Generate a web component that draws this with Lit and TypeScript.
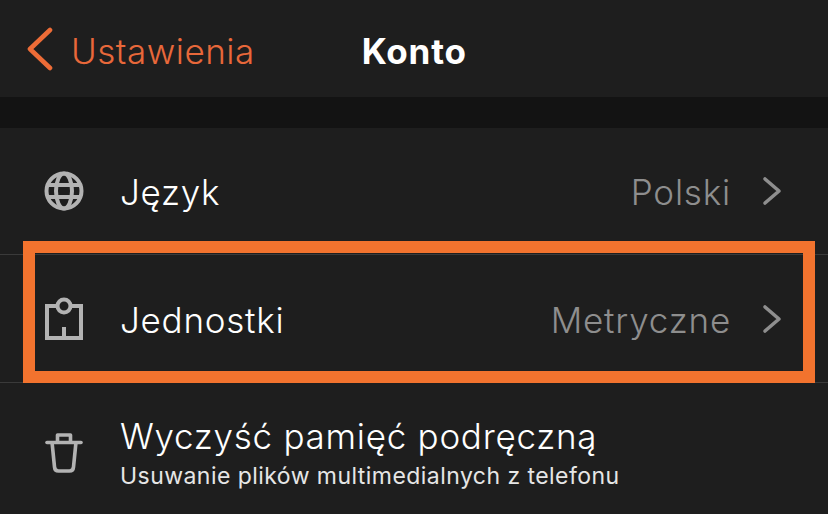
import { LitElement, css, html, svg } from 'lit';
import { customElement } from 'lit/decorators.js';

const chevron = html`<svg class="chevron" width="20" height="30" viewBox="0 0 20 30" fill="none">
  <path d="M3 3l14 12L3 27" stroke="#8e8e8e" stroke-width="3.6" stroke-linecap="round" stroke-linejoin="round" />
</svg>`;

const globe = svg`<g fill="none" stroke="#b3b3b3" stroke-width="4">
  <circle cx="20" cy="20" r="17.5" />
  <ellipse cx="20" cy="20" rx="8" ry="17.5" />
  <path d="M4 14h32M4 26h32" />
</g>`;

const clipboard = svg`<g fill="none" stroke="#b3b3b3" stroke-width="4">
  <path d="M11.5 9H2v32h34V9h-9.5" />
  <circle cx="19" cy="9" r="6.5" />
  <path d="M19 30v11" />
</g>`;

const trash = svg`<g fill="none" stroke="#b3b3b3" stroke-width="3.6" stroke-linejoin="round">
  <path d="M2 11.5h34" stroke-linecap="round" />
  <path d="M12.5 11V4h13v7" />
  <path d="M7 11l2.5 25q.3 4 4 4h11q3.7 0 4-4L31 11" />
</g>`;

@customElement('app-root')
export class AppRoot extends LitElement {
  static styles = css`
    :host {
      display: block;
      position: relative;
      width: 828px;
      height: 514px;
      overflow: hidden;
      background: #1e1e1e;
      font-family: Inter, 'Liberation Sans', sans-serif;
      color: #fff;
    }

    .nav {
      display: flex;
      align-items: center;
      height: 97px;
      padding: 4px 0 0 27px;
      box-sizing: border-box;
    }

    .back {
      display: flex;
      align-items: center;
      gap: 18px;
      color: #e8683a;
      font-size: 35px;
      font-weight: 350;
      letter-spacing: 0.5px;
    }

    .back svg {
      margin-top: -4px;
    }

    .title {
      margin-left: 107px;
      font-size: 35px;
      font-weight: 700;
      letter-spacing: 0.8px;
    }

    .band {
      height: 31px;
      background: #131313;
    }

    .row {
      display: flex;
      align-items: center;
      box-sizing: border-box;
      padding: 0 46px 0 44px;
      height: 127px;
      border-bottom: 1px solid #3a3a3a;
    }

    .row.units {
      height: 128px;
    }

    .row.last {
      border-bottom: 0;
      height: 131px;
      padding-top: 6px;
    }

    .icon {
      flex: none;
      width: 40px;
      margin-right: 36px;
      display: flex;
      justify-content: center;
    }

    .label {
      margin-top: 2px;
      font-size: 35px;
      font-weight: 350;
      color: #fff;
      flex: 1;
      letter-spacing: 0.73px;
    }

    .text {
      flex: 1;
      display: flex;
      flex-direction: column;
      gap: 5px;
    }

    .sub {
      font-size: 23px;
      letter-spacing: 0.45px;
      color: #e6e6e6;
    }

    .value {
      margin-top: 2px;
      font-size: 35px;
      font-weight: 350;
      letter-spacing: 0.8px;
      color: #8e8e8e;
      margin-right: 31px;
    }

    .chevron {
      flex: none;
    }

    .highlight {
      position: absolute;
      left: 23px;
      top: 241px;
      width: 792px;
      height: 142px;
      box-sizing: border-box;
      border: 12px solid #f2732e;
    }
  `;

  render() {
    return html`
      <div class="nav">
        <div class="back">
          <svg width="26" height="44" viewBox="0 0 26 44" fill="none">
            <path d="M23 3L3 22l20 19" stroke="#ed6c37" stroke-width="4.6" stroke-linecap="round" stroke-linejoin="round" />
          </svg>
          <span>Ustawienia</span>
        </div>
        <div class="title">Konto</div>
      </div>
      <div class="band"></div>
      <div class="row">
        <div class="icon"><svg width="40" height="40" viewBox="0 0 40 40">${globe}</svg></div>
        <div class="label">Język</div>
        <div class="value">Polski</div>
        ${chevron}
      </div>
      <div class="row units">
        <div class="icon"><svg width="38" height="43" viewBox="0 0 38 43">${clipboard}</svg></div>
        <div class="label">Jednostki</div>
        <div class="value">Metryczne</div>
        ${chevron}
      </div>
      <div class="row last">
        <div class="icon"><svg width="38" height="42" viewBox="0 0 38 42">${trash}</svg></div>
        <div class="text">
          <div class="label">Wyczyść pamięć podręczną</div>
          <div class="sub">Usuwanie plików multimedialnych z telefonu</div>
        </div>
      </div>
      <div class="highlight"></div>
    `;
  }
}
